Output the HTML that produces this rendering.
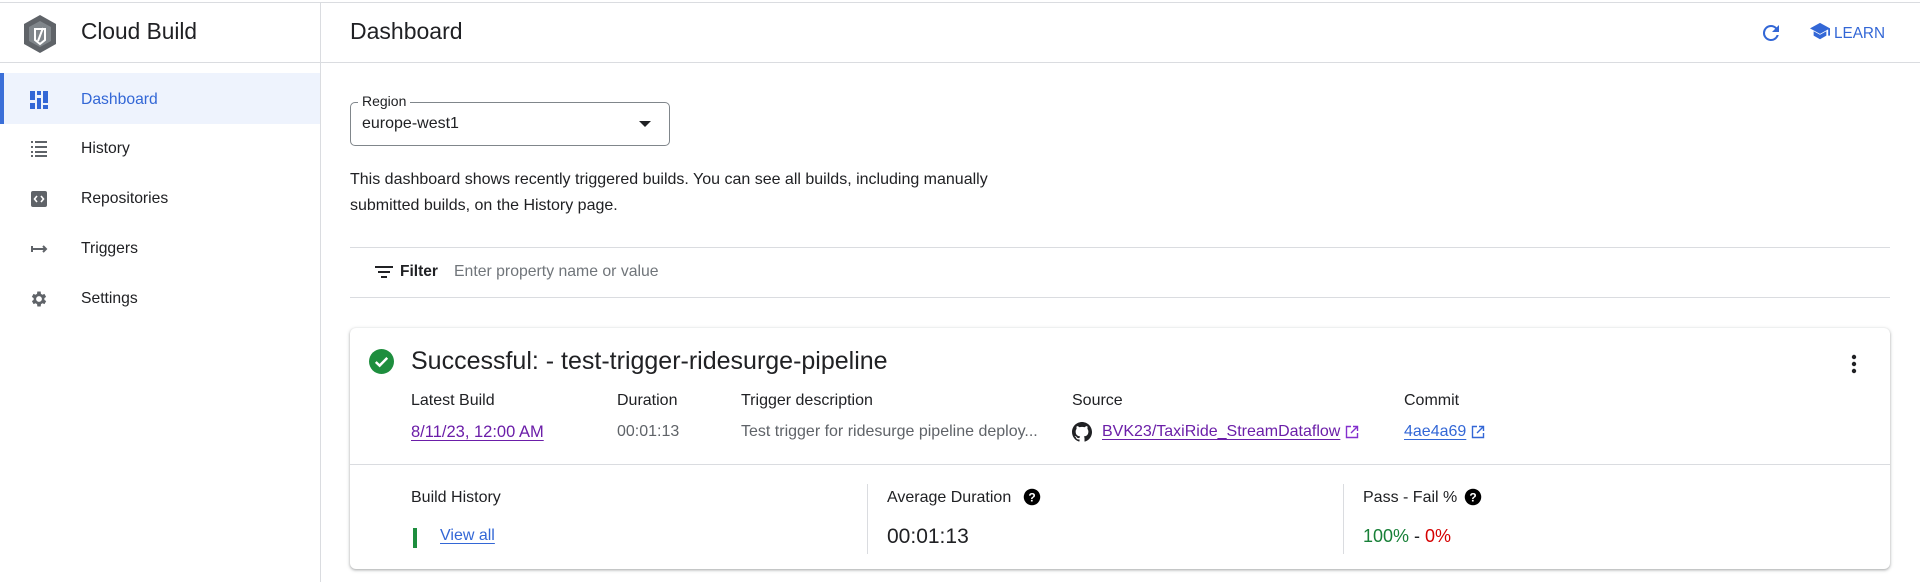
<!DOCTYPE html>
<html><head><meta charset="utf-8"><style>
*{box-sizing:border-box;margin:0;padding:0}
body{width:1920px;height:582px;overflow:hidden;background:#fff;font-family:"Liberation Sans",Arial,sans-serif;color:#202124;position:relative}
.a{position:absolute;white-space:nowrap}
.nav{position:absolute;left:0;width:320px;height:50px;display:flex;align-items:center;font-size:15.7px;color:#202124}
.nav svg{position:absolute;left:29px}
.nav span{position:absolute;left:81px}
.lbl{font-size:16px;color:#202124}
.val{font-size:16px;color:#5f6368;display:flex;align-items:center}
.val svg{margin-left:5px}
a{color:#6b1ea8;text-decoration:underline;text-underline-offset:3px}
</style></head><body>
<div class="a" style="left:0;top:2px;width:1920px;height:1px;background:#dadce0"></div>
<div class="a" style="left:320px;top:3px;width:1px;height:579px;background:#dadce0"></div>
<div class="a" style="left:0;top:62px;width:1920px;height:1px;background:#dadce0"></div>

<svg class="a" style="left:22px;top:14px" width="36" height="40" viewBox="0 0 36 40"><path d="M18 1 L34 10 L34 30 L18 39 L2 30 L2 10Z" fill="#5f6368"/><path d="M18 7 L29 13 L29 27 L18 33 L7 27 L7 13Z" fill="#80868b"/><path d="M13 15 L23 15 L23 26 L18 30 L13 26Z" fill="none" stroke="#fff" stroke-width="2"/><path d="M16 27 L21 14" stroke="#fff" stroke-width="2"/></svg>
<div class="a" style="left:81px;top:18px;font-size:22.7px;color:#202124">Cloud Build</div>

<div class="a" style="left:0;top:73px;width:320px;height:51px;background:#eef3fd"></div>
<div class="a" style="left:0;top:73px;width:4px;height:51px;background:#3b6fd8"></div>
<div class="nav" style="top:74px;height:51px;color:#3367d6"><svg width="20" height="20" viewBox="0 0 20 20" fill="#3367d6"><rect x="1" y="1" width="5" height="9"/><rect x="1" y="13" width="5" height="6"/><rect x="8" y="1" width="4" height="4"/><rect x="8" y="8" width="4" height="11"/><rect x="14" y="1" width="5" height="12"/><rect x="14" y="15" width="5" height="4"/></svg><span>Dashboard</span></div>
<div class="nav" style="top:124px"><svg width="20" height="20" viewBox="0 0 20 20" fill="#5f6368"><rect x="2" y="2" width="2" height="2"/><rect x="6" y="2" width="12" height="2"/><rect x="2" y="7" width="2" height="2"/><rect x="6" y="7" width="12" height="2"/><rect x="2" y="12" width="2" height="2"/><rect x="6" y="12" width="12" height="2"/><rect x="2" y="16" width="2" height="2"/><rect x="6" y="16" width="12" height="2"/></svg><span>History</span></div>
<div class="nav" style="top:174px"><svg width="20" height="20" viewBox="0 0 20 20"><rect x="2" y="2" width="16" height="16" rx="2" fill="#5f6368"/><path d="M8 7 L5.5 10 L8 13 M12 7 L14.5 10 L12 13" stroke="#fff" stroke-width="1.6" fill="none"/></svg><span>Repositories</span></div>
<div class="nav" style="top:224px"><svg width="20" height="20" viewBox="0 0 20 20"><path d="M3 10 H17 M14 7 L17 10 L14 13 M3 7 V13" stroke="#5f6368" stroke-width="2" fill="none"/></svg><span>Triggers</span></div>
<div class="nav" style="top:274px"><svg width="20" height="20" viewBox="0 0 24 24" fill="#5f6368"><path d="M19.4 13a7.5 7.5 0 0 0 0-2l2.1-1.6-2-3.5-2.5 1a7 7 0 0 0-1.7-1L15 3h-4l-.4 2.9a7 7 0 0 0-1.7 1l-2.5-1-2 3.5L6.6 11a7.5 7.5 0 0 0 0 2l-2.1 1.6 2 3.5 2.5-1a7 7 0 0 0 1.7 1L11 21h4l.4-2.9a7 7 0 0 0 1.7-1l2.5 1 2-3.5zM13 15.5a3.5 3.5 0 1 1 0-7 3.5 3.5 0 0 1 0 7z" transform="translate(-1 0)"/></svg><span>Settings</span></div>

<div class="a" style="left:350px;top:18px;font-size:23px">Dashboard</div>
<svg class="a" style="left:1759px;top:21px" width="24" height="24" viewBox="0 0 24 24"><path d="M17.65 6.35A7.96 7.96 0 0 0 12 4a8 8 0 1 0 7.73 10h-2.08A6 6 0 1 1 12 6c1.66 0 3.14.69 4.22 1.78L13 11h7V4z" fill="#3367d6"/></svg>
<svg class="a" style="left:1809px;top:22px" width="22" height="20" viewBox="0 0 24 22"><path d="M12 1 L1 7 L12 13 L21 8.1 V15 H23 V7Z M5 10.2 V15 L12 19 L19 15 V10.2 L12 14Z" fill="#3367d6"/></svg>
<div class="a" style="left:1834px;top:25px;font-size:15.3px;color:#3367d6">LEARN</div>

<div class="a" style="left:350px;top:102px;width:320px;height:44px;border:1px solid #80868b;border-radius:5px"></div>
<div class="a" style="left:358px;top:93px;background:#fff;padding:0 4px;font-size:14px;color:#202124">Region</div>
<div class="a" style="left:362px;top:115px;font-size:16px">europe-west1</div>
<div class="a" style="left:639px;top:121px;width:0;height:0;border-left:6px solid transparent;border-right:6px solid transparent;border-top:6px solid #202124"></div>

<div class="a" style="left:350px;top:167px;font-size:16px;line-height:26px">This dashboard shows recently triggered builds. You can see all builds, including manually<br>submitted builds, on the History page.</div>

<div class="a" style="left:350px;top:247px;width:1540px;height:1px;background:#dadce0"></div>
<div class="a" style="left:350px;top:297px;width:1540px;height:1px;background:#dadce0"></div>
<svg class="a" style="left:375px;top:265px" width="18" height="14" viewBox="0 0 18 14" fill="#202124"><rect x="0" y="1" width="18" height="2"/><rect x="3" y="6" width="12" height="2"/><rect x="6" y="11" width="6" height="2"/></svg>
<div class="a" style="left:400px;top:263px;font-size:15.5px;font-weight:bold;color:#202124">Filter</div>
<div class="a" style="left:454px;top:263px;font-size:15.8px;color:#70757a">Enter property name or value</div>

<div class="a" style="left:350px;top:328px;width:1540px;height:241px;border-radius:6px;box-shadow:0 1px 2px rgba(60,64,67,.3),0 1px 3px 1px rgba(60,64,67,.15)"></div>
<svg class="a" style="left:369px;top:349px" width="25" height="25" viewBox="0 0 24 24"><circle cx="12" cy="12" r="12" fill="#1e8e3e"/><path d="M6.5 12.5 L10.2 16 L17.5 8.5" stroke="#fff" stroke-width="2.4" fill="none"/></svg>
<div class="a" style="left:411px;top:347px;font-size:25px;color:#202124">Successful: - test-trigger-ridesurge-pipeline</div>
<svg class="a" style="left:1848px;top:352px" width="12" height="24" viewBox="0 0 12 24" fill="#202124"><circle cx="6" cy="5" r="2.2"/><circle cx="6" cy="12" r="2.2"/><circle cx="6" cy="19" r="2.2"/></svg>

<div class="a lbl" style="left:411px;top:392px">Latest Build</div>
<div class="a lbl" style="left:617px;top:392px">Duration</div>
<div class="a lbl" style="left:741px;top:392px">Trigger description</div>
<div class="a lbl" style="left:1072px;top:392px">Source</div>
<div class="a lbl" style="left:1404px;top:392px">Commit</div>

<div class="a val" style="left:411px;top:423px"><a style="font-size:16.5px">8/11/23, 12:00 AM</a></div>
<div class="a val" style="left:617px;top:423px">00:01:13</div>
<div class="a val" style="left:741px;top:423px">Test trigger for ridesurge pipeline deploy...</div>
<svg class="a" style="left:1072px;top:422px" width="20" height="20" viewBox="0 0 16 16"><path fill="#202124" d="M8 0C3.58 0 0 3.58 0 8c0 3.54 2.290 6.53 5.47 7.59.4.07.55-.17.55-.38v-1.330c-2.23.48-2.7-1.07-2.7-1.07-.36-.92-.89-1.17-.89-1.17-.73-.5.06-.49.06-.49.8.06 1.23.83 1.23.83.72 1.22 1.87.87 2.33.67.07-.52.28-.87.5-1.07-1.78-.2-3.64-.89-3.64-3.95 0-.87.31-1.59.82-2.15-.08-.2-.36-1.02.08-2.12 0 0 .67-.21 2.2.82a7.6 7.6 0 0 1 4 0c1.53-1.04 2.2-.82 2.2-.82.44 1.1.16 1.92.08 2.12.51.56.82 1.27.82 2.150 0 3.07-1.870 3.75-3.65 3.95.29.25.54.73.54 1.48v2.2c0 .21.15.46.55.38A8.01 8.01 0 0 0 16 8c0-4.42-3.58-8-8-8z"/></svg>
<div class="a val" style="left:1102px;top:423px"><a>BVK23/TaxiRide_StreamDataflow</a><svg width="14" height="14" viewBox="0 0 14 14" fill="none" stroke="#8430ce" stroke-width="1.4"><path d="M6 1.5H1.5v11h11V8M8 1.5h4.5V6M12.5 1.5L6 8"/></svg></div>
<div class="a val" style="left:1404px;top:423px"><a style="color:#3367d6">4ae4a69</a><svg width="14" height="14" viewBox="0 0 14 14" fill="none" stroke="#3367d6" stroke-width="1.4"><path d="M6 1.5H1.5v11h11V8M8 1.5h4.5V6M12.5 1.5L6 8"/></svg></div>

<div class="a" style="left:350px;top:464px;width:1540px;height:1px;background:#dadce0"></div>
<div class="a" style="left:867px;top:484px;width:1px;height:70px;background:#dadce0"></div>
<div class="a" style="left:1343px;top:484px;width:1px;height:70px;background:#dadce0"></div>

<div class="a lbl" style="left:411px;top:489px">Build History</div>
<div class="a" style="left:413px;top:528px;width:4px;height:20px;background:#1e8e3e"></div>
<div class="a val" style="left:440px;top:527px"><a style="color:#3367d6">View all</a></div>

<div class="a lbl" style="left:887px;top:489px">Average Duration</div>
<svg class="a" style="left:1023px;top:488px" width="18" height="18" viewBox="0 0 24 24"><circle cx="12" cy="12" r="11" fill="#000"/><text x="12" y="18" text-anchor="middle" font-family="Liberation Sans" font-weight="bold" font-size="16" fill="#fff">?</text></svg>
<div class="a" style="left:887px;top:525px;font-size:21px;color:#202124">00:01:13</div>

<div class="a lbl" style="left:1363px;top:489px">Pass - Fail %</div>
<svg class="a" style="left:1464px;top:488px" width="18" height="18" viewBox="0 0 24 24"><circle cx="12" cy="12" r="11" fill="#000"/><text x="12" y="18" text-anchor="middle" font-family="Liberation Sans" font-weight="bold" font-size="16" fill="#fff">?</text></svg>
<div class="a" style="left:1363px;top:526px;font-size:18px;color:#202124"><span style="color:#188038">100%</span> - <span style="color:#d50000">0%</span></div>
</body></html>
